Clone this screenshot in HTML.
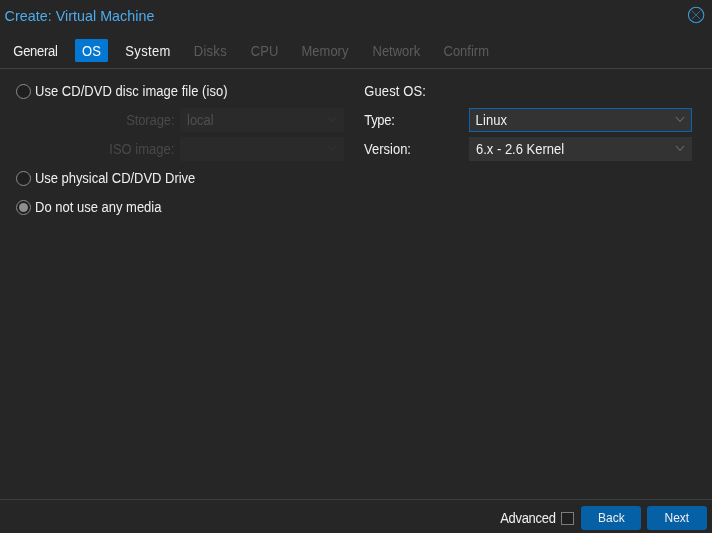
<!DOCTYPE html>
<html>
<head>
<meta charset="utf-8">
<title>Create: Virtual Machine</title>
<style>
html,body{margin:0;padding:0;}
body{width:712px;height:533px;background:#262626;overflow:hidden;position:relative;font-family:"Liberation Sans",Arial,Helvetica,sans-serif;font-size:13px;color:#f0f0f0;}
#wrap{position:absolute;left:0;top:0;width:712px;height:533px;will-change:transform;}
.abs{position:absolute;white-space:nowrap;line-height:1;}
.t{font-size:13px;transform:scale(1,1.06);transform-origin:0 11px;}
#title{left:4.6px;top:8.6px;font-size:14.3px;letter-spacing:0.03px;color:#4eabec;transform:scale(1,1.045);transform-origin:0 12px;}
.tab{top:44.6px;color:#f0f0f0;}
.tab.dis{color:#5c5c5c;}
#ostab{left:75px;top:39px;width:33px;height:23px;background:#0477d2;border-radius:1.5px;}
#hline{left:0;top:68px;width:712px;height:1px;background:#414141;}
#fline{left:0;top:499px;width:712px;height:1px;background:#3e3e3e;}
.radio{width:13px;height:13px;border:1px solid #8c8c8c;border-radius:50%;background:#1f1f1f;left:16px;}
.lbl{color:#f0f0f0;}
.dlbl{color:#494949;text-align:right;width:120px;left:54.5px;transform-origin:100% 11px;}
.field{height:24px;background:#333333;box-sizing:border-box;}
.field.dis{background:#2a2a2a;}
.field.focus{border:1px solid #0b62ae;}
.btn{top:506px;height:24px;width:60px;background:#0560a6;border-radius:3px;}
.btxt{font-size:12px;color:#f0f0f0;top:512.3px;transform:scale(1,1.06);transform-origin:0 10px;}
</style>
</head>
<body>
<div id="wrap">
<div class="abs" id="title">Create: Virtual Machine</div>
<svg class="abs" style="left:686px;top:5px" width="20" height="20" viewBox="0 0 20 20"><circle cx="10.1" cy="10" r="7.7" fill="none" stroke="#3c9dd8" stroke-width="1.1"/><path d="M5.9 5.8 L14.3 14.2 M14.3 5.8 L5.9 14.2" stroke="#2f86c2" stroke-width="0.8" fill="none"/></svg>

<div class="abs t tab" style="left:13.3px;letter-spacing:-0.27px">General</div>
<div class="abs" id="ostab"></div>
<div class="abs t tab" style="left:81.9px;color:#fff;letter-spacing:0.3px">OS</div>
<div class="abs t tab" style="left:125.3px;letter-spacing:0.33px">System</div>
<div class="abs t tab dis" style="left:193.7px;letter-spacing:0.3px">Disks</div>
<div class="abs t tab dis" style="left:250.8px;letter-spacing:0.1px">CPU</div>
<div class="abs t tab dis" style="left:301.5px">Memory</div>
<div class="abs t tab dis" style="left:372.5px">Network</div>
<div class="abs t tab dis" style="left:443.5px">Confirm</div>
<div class="abs" id="hline"></div>

<div class="abs radio" style="top:84px"></div>
<div class="abs t lbl" style="left:35px;top:84.5px;letter-spacing:0.035px">Use CD/DVD disc image file (iso)</div>
<div class="abs t dlbl" style="top:113.5px;letter-spacing:-0.1px">Storage:</div>
<div class="abs field dis" style="left:180px;top:108px;width:164px"></div>
<div class="abs t" style="left:187px;top:113.5px;color:#4f4f4f">local</div>
<div class="abs t dlbl" style="top:142.5px;letter-spacing:0.02px">ISO image:</div>
<div class="abs field dis" style="left:180px;top:137px;width:164px"></div>

<div class="abs radio" style="top:171px"></div>
<div class="abs t lbl" style="left:34.9px;top:171.5px;letter-spacing:-0.03px">Use physical CD/DVD Drive</div>
<div class="abs radio" style="top:200px"></div>
<div class="abs" style="left:19px;top:203px;width:9px;height:9px;border-radius:50%;background:#8e8e8e"></div>
<div class="abs t lbl" style="left:35px;top:200.5px">Do not use any media</div>

<div class="abs t lbl" style="left:364.2px;top:84.5px;letter-spacing:0.13px">Guest OS:</div>
<div class="abs t lbl" style="left:364.2px;top:113.5px;letter-spacing:-0.27px">Type:</div>
<div class="abs field focus" style="left:469px;top:108px;width:223px"></div>
<div class="abs t lbl" style="left:475.6px;top:113.5px;letter-spacing:0.1px">Linux</div>
<div class="abs t lbl" style="left:364px;top:142.5px">Version:</div>
<div class="abs field" style="left:469px;top:137px;width:223px"></div>
<div class="abs t lbl" style="left:476px;top:142.5px">6.x - 2.6 Kernel</div>
<svg class="abs" style="left:674px;top:114px" width="12" height="12" viewBox="0 0 12 12"><path d="M2 3 L6 7.5 L10 3" fill="none" stroke="#6a6a6a" stroke-width="1.1"/></svg>
<svg class="abs" style="left:674px;top:143px" width="12" height="12" viewBox="0 0 12 12"><path d="M2 3 L6 7.5 L10 3" fill="none" stroke="#6a6a6a" stroke-width="1.1"/></svg>
<svg class="abs" style="left:326px;top:114px" width="12" height="12" viewBox="0 0 12 12"><path d="M2 3 L6 7.5 L10 3" fill="none" stroke="#333333" stroke-width="1.1"/></svg>
<svg class="abs" style="left:326px;top:143px" width="12" height="12" viewBox="0 0 12 12"><path d="M2 3 L6 7.5 L10 3" fill="none" stroke="#333333" stroke-width="1.1"/></svg>

<div class="abs" id="fline"></div>
<div class="abs t lbl" style="left:500.2px;top:511.5px;letter-spacing:-0.3px">Advanced</div>
<div class="abs" style="left:561px;top:512px;width:11px;height:11px;border:1px solid #7c7c7c;background:#1f1f1f"></div>
<div class="abs btn" style="left:581px"></div>
<div class="abs btxt" style="left:598px">Back</div>
<div class="abs btn" style="left:647px"></div>
<div class="abs btxt" style="left:664.5px">Next</div>
</div>
</body>
</html>
